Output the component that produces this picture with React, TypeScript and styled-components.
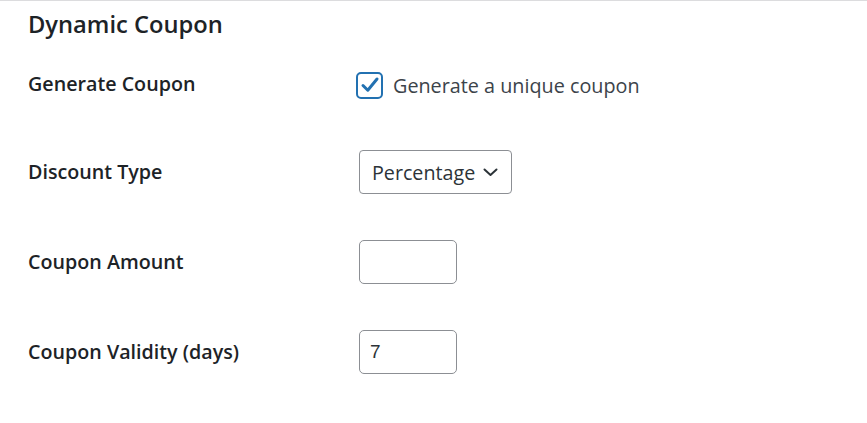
import styled, { createGlobalStyle } from 'styled-components';

const GlobalStyle = createGlobalStyle`
  html, body {
    margin: 0;
    background: #fff;
  }
  body {
    font-family: "Open Sans", "Noto Sans", sans-serif;
    color: #1d2327;
  }
`;

const Page = styled.div`
  border-top: 1px solid #dcdcde;
  padding: 0 28px;
`;

const Title = styled.h2`
  margin: 0;
  padding-top: 7px;
  font-size: 23.7px;
  line-height: 32px;
  font-weight: 600;
  color: #1d2327;
`;

const Form = styled.div`
  display: grid;
  grid-template-columns: 331px 1fr;
  grid-auto-rows: 90px;
  margin-top: -2px;
`;

const Label = styled.div<{ $shift?: number }>`
  display: flex;
  align-items: center;
  font-size: 19.7px;
  font-weight: 600;
  color: #1d2327;
  transform: translateY(${(p) => p.$shift ?? 0}px);
`;

const Field = styled.div<{ $shift?: number }>`
  display: flex;
  align-items: center;
  transform: translateY(${(p) => p.$shift ?? 0}px);
`;

const CheckLabel = styled.label`
  display: flex;
  align-items: center;
  gap: 10px;
  margin-left: -3px;
  font-size: 19.8px;
  color: #3c434a;
`;

const CheckBox = styled.span`
  width: 23px;
  height: 23px;
  border: 2px solid #2271b1;
  border-radius: 5px;
  display: flex;
  align-items: center;
  justify-content: center;
  box-sizing: content-box;
`;

const Select = styled.div`
  box-sizing: border-box;
  height: 44px;
  width: 153px;
  border: 1px solid #8c8f94;
  border-radius: 4px;
  display: flex;
  align-items: center;
  justify-content: space-between;
  padding: 0 13px 0 12px;
  font-size: 19.7px;
  color: #2c3338;
`;

const TextInput = styled.div`
  box-sizing: border-box;
  height: 44px;
  width: 98px;
  border: 1px solid #8c8f94;
  border-radius: 5px;
  display: flex;
  align-items: center;
  padding: 0 10px;
  font-family: "Liberation Sans", Arial, sans-serif;
  font-size: 19px;
  color: #2c3338;
`;

export default function App() {
  return (
    <>
      <GlobalStyle />
      <Page>
        <Title>Dynamic Coupon</Title>
        <Form>
          <Label>Generate Coupon</Label>
          <Field $shift={2}>
            <CheckLabel>
              <CheckBox>
                <svg width="20" height="20" viewBox="0 0 20 20">
                  <path d="M3 10.5 L7.8 15.2 L17 4" fill="none" stroke="#2271b1" strokeWidth="3" strokeLinecap="round" strokeLinejoin="round" />
                </svg>
              </CheckBox>
              Generate a unique coupon
            </CheckLabel>
          </Field>

          <Label $shift={-2}>Discount Type</Label>
          <Field $shift={-1}>
            <Select>
              Percentage
              <svg width="15" height="10" viewBox="0 0 15 10">
                <path d="M1.5 2.5 L7.5 8 L13.5 2.5" fill="none" stroke="#2c3338" strokeWidth="2" strokeLinecap="round" strokeLinejoin="round" />
              </svg>
            </Select>
          </Field>

          <Label $shift={-2}>Coupon Amount</Label>
          <Field $shift={-1}>
            <TextInput />
          </Field>

          <Label $shift={-2}>Coupon Validity (days)</Label>
          <Field $shift={-1}>
            <TextInput>7</TextInput>
          </Field>
        </Form>
      </Page>
    </>
  );
}
